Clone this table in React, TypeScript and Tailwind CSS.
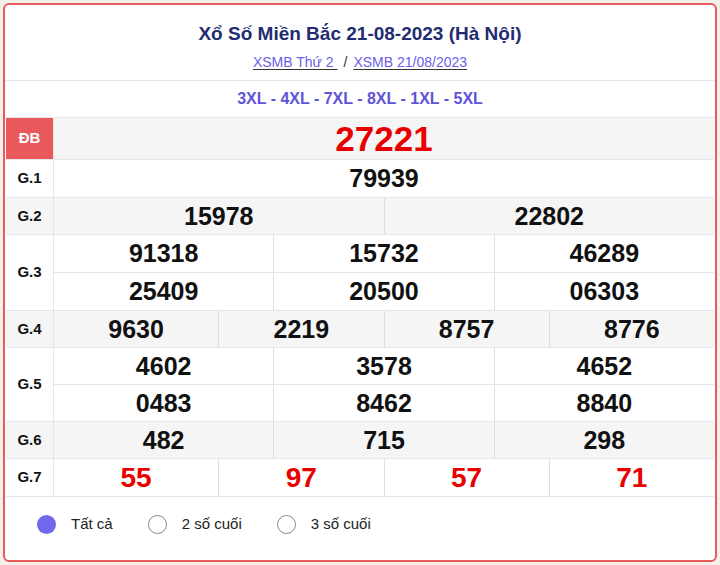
import React from "react";

type Group = {
  label: string;
  rows: string[][];
  height: number; // per sub-row, incl. border
  shade?: boolean;
  red?: boolean;
  size: string;
};

const groups: Group[] = [
  { label: "G.1", rows: [["79939"]], height: 38, size: "text-[25px]" },
  { label: "G.2", rows: [["15978", "22802"]], height: 37, shade: true, size: "text-[25px]" },
  {
    label: "G.3",
    rows: [
      ["91318", "15732", "46289"],
      ["25409", "20500", "06303"],
    ],
    height: 38,
    size: "text-[25px]",
  },
  { label: "G.4", rows: [["9630", "2219", "8757", "8776"]], height: 37, shade: true, size: "text-[25px]" },
  {
    label: "G.5",
    rows: [
      ["4602", "3578", "4652"],
      ["0483", "8462", "8840"],
    ],
    height: 37,
    size: "text-[25px]",
  },
  { label: "G.6", rows: [["482", "715", "298"]], height: 37, shade: true, size: "text-[25px]" },
  { label: "G.7", rows: [["55", "97", "57", "71"]], height: 38, red: true, size: "text-[28px]" },
];

function PrizeRow({ g }: { g: Group }) {
  return (
    <div className={`flex border-b border-[#e6e6ea] ${g.shade ? "bg-[#f5f5f6]" : "bg-white"}`}>
      <div className="w-[48px] shrink-0 flex items-center justify-center border-r border-[#e6e6ea] text-[15px] font-bold text-[#111]">
        {g.label}
      </div>
      <div className="flex-1 flex flex-col">
        {g.rows.map((r, i) => (
          <div
            key={i}
            className={`flex ${i < g.rows.length - 1 ? "border-b border-[#e6e6ea]" : ""}`}
            style={{ height: i < g.rows.length - 1 ? g.height : g.height - 1 }}
          >
            {r.map((n, j) => (
              <div
                key={j}
                className={`flex-1 basis-0 flex items-center justify-center font-bold leading-none ${g.size} ${
                  g.red ? "text-[#e80000]" : "text-[#111]"
                } ${j > 0 ? "border-l border-[#dedee2]" : ""}`}
              >
                {n}
              </div>
            ))}
          </div>
        ))}
      </div>
    </div>
  );
}

function Radio({ checked, label }: { checked?: boolean; label: string }) {
  return (
    <label className="flex items-center gap-[15px] text-[15px] text-[#222]">
      {checked ? (
        <span className="w-[19px] h-[19px] rounded-full bg-[#7268ee]" />
      ) : (
        <span className="w-[19px] h-[19px] rounded-full border border-[#888] bg-white" />
      )}
      {label}
    </label>
  );
}

export default function App() {
  return (
    <div className="w-[720px] h-[565px] bg-[#f3efeb] p-[3px] font-['Liberation_Sans',Arial,sans-serif]">
      <div className="h-full rounded-[6px] border-2 border-[#e9585b] bg-white overflow-hidden flex flex-col">
        <div className="pt-[17px] pb-[8px] border-b border-[#e6e6ea] flex flex-col items-center">
          <h1 className="text-[19px] leading-[24px] font-bold text-[#232c70]">
            Xổ Số Miền Bắc 21-08-2023 (Hà Nội)
          </h1>
          <div className="mt-[6px] text-[14px] leading-[20px] text-[#333]">
            <a className="text-[#6b60e8] underline decoration-[#333] underline-offset-2">XSMB Thứ 2 </a>
            <span className="mx-[6px]">/</span>
            <a className="text-[#6b60e8] underline decoration-[#333] underline-offset-2">XSMB 21/08/2023</a>
          </div>
        </div>
        <div className="h-[37px] flex items-center justify-center text-[16px] font-bold text-[#5e54d8] border-b border-[#e6e6ea]">
          3XL - 4XL - 7XL - 8XL - 1XL - 5XL
        </div>
        <div className="mx-px">
          <div className="flex h-[42px] border-b border-[#e6e6ea] bg-[#f5f5f6]">
            <div className="w-[48px] shrink-0 flex items-center justify-center bg-[#e9585b] text-white text-[15px] font-bold border-r border-[#e6e6ea]">
              ĐB
            </div>
            <div className="flex-1 flex items-center justify-center text-[35px] leading-none font-bold text-[#e80000]">
              27221
            </div>
          </div>
          {groups.map((g) => (
            <PrizeRow key={g.label} g={g} />
          ))}
        </div>
        <div className="flex-1 flex items-center gap-[35px] pl-[32px] pb-[8px]">
          <Radio checked label="Tất cả" />
          <Radio label="2 số cuối" />
          <Radio label="3 số cuối" />
        </div>
      </div>
    </div>
  );
}
